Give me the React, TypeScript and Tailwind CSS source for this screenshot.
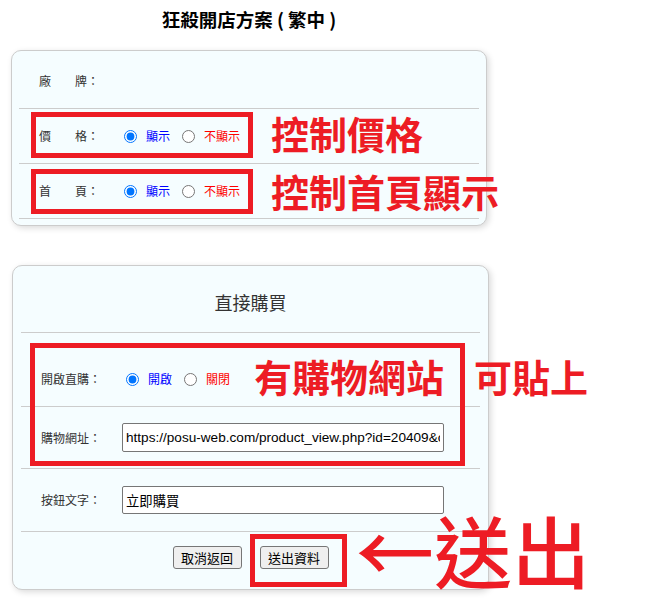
import React from 'react';

const cjk = { fontFamily: '"Noto Sans CJK TC", "Noto Sans", sans-serif' };
const inputFont = { fontFamily: '"Liberation Sans", "Noto Sans CJK TC", sans-serif' };

function RadioPair({ name, on, off }: { name: string; on: string; off: string }) {
  return (
    <div className="flex items-center text-[12px]">
      <input type="radio" name={name} defaultChecked className="m-0 ml-[5px] w-[13px] h-[13px]" />
      <span className="ml-[9px] text-[#0000ff]">{on}</span>
      <input type="radio" name={name} className="m-0 ml-[12px] w-[13px] h-[13px]" />
      <span className="ml-[9px] text-[#ff0000]">{off}</span>
    </div>
  );
}

function Row1({ label, children }: { label: string; children?: React.ReactNode }) {
  return (
    <div className="h-[55px] flex items-center pl-[20px] border-b border-[#cccccc]">
      <div className="w-[80px] text-[12px] text-[#333333] whitespace-pre">{label}</div>
      {children}
    </div>
  );
}

export default function App() {
  return (
    <div className="relative w-[652px] h-[598px] bg-white" style={cjk}>
      <div className="w-[498px]">
        <h1 className="h-[38px] leading-[38px] text-center text-[18.5px] font-bold text-black">
          狂殺開店方案 ( 繁中 )
        </h1>

        {/* 基本設定 */}
        <div className="ml-[11px] mt-[12px] w-[476px] h-[176px] bg-[#f5fdff] border border-[#cccccc] rounded-[10px] shadow-[2px_2px_6px_rgba(0,0,0,0.15)] px-[7px] pt-[3px]">
          <Row1 label="廠　　牌：" />
          <Row1 label="價　　格：">
            <RadioPair name="price" on="顯示" off="不顯示" />
          </Row1>
          <Row1 label="首　　頁：">
            <RadioPair name="home" on="顯示" off="不顯示" />
          </Row1>
        </div>

        {/* 直接購買 */}
        <div className="ml-[12px] mt-[39px] w-[477px] h-[325px] bg-[#f5fdff] border border-[#cccccc] rounded-[10px] shadow-[2px_2px_6px_rgba(0,0,0,0.15)] px-[8px]">
          <div className="h-[67px] pt-[7px] flex items-center justify-center border-b border-[#cccccc] text-[18px] text-[#333333]">
            直接購買
          </div>
          <div className="h-[74px] pt-[19px] flex items-center pl-[20px] border-b border-[#cccccc]">
            <div className="w-[81px] text-[12px] text-[#333333]">開啟直購：</div>
            <div className="flex items-center text-[12px]">
              <input type="radio" name="buy" defaultChecked className="m-0 ml-[4px] w-[13px] h-[13px]" />
              <span className="ml-[9px] text-[#0000ff]">開啟</span>
              <input type="radio" name="buy" className="m-0 ml-[12px] w-[13px] h-[13px]" />
              <span className="ml-[9px] text-[#ff0000]">關閉</span>
            </div>
          </div>
          <div className="h-[62px] flex items-center pl-[20px] border-b border-[#cccccc]">
            <div className="w-[81px] text-[12px] text-[#333333]">購物網址：</div>
            <input
              type="text"
              defaultValue="https://posu-web.com/product_view.php?id=20409&cid=1"
              className="w-[322px] h-[29px] px-[3px] bg-white border border-[#767676] rounded-[2px] text-[13.6px] text-black outline-none"
              style={inputFont}
            />
          </div>
          <div className="h-[63px] flex items-center pl-[20px] border-b border-[#cccccc]">
            <div className="w-[81px] text-[12px] text-[#333333]">按鈕文字：</div>
            <input
              type="text"
              defaultValue="立即購買"
              className="w-[322px] h-[28px] px-[3px] bg-white border border-[#767676] rounded-[2px] text-[13.33px] text-black outline-none"
              style={inputFont}
            />
          </div>
          <div className="h-[57px] pb-[6px] flex items-center justify-center gap-[18px]">
            <button className="h-[23px] w-[69px] bg-[#efefef] border border-[#767676] rounded-[3px] text-[13px] text-black">取消返回</button>
            <button className="h-[23px] w-[69px] bg-[#efefef] border border-[#767676] rounded-[3px] text-[13px] text-black">送出資料</button>
          </div>
        </div>
      </div>

      {/* 標註 */}
      <div className="absolute left-[31px] top-[112px] w-[222px] h-[46px] border-[5px] border-[#ed1c24]" />
      <div className="absolute left-[31px] top-[169px] w-[222px] h-[45px] border-[5px] border-[#ed1c24]" />
      <div className="absolute left-[271px] top-[109px] text-[38px] leading-[48px] font-bold text-[#ed1c24] whitespace-nowrap">控制價格</div>
      <div className="absolute left-[271px] top-[167px] text-[38px] leading-[48px] font-bold text-[#ed1c24] whitespace-nowrap">控制首頁顯示</div>

      <div className="absolute left-[30px] top-[343px] w-[435px] h-[123px] border-[5px] border-[#ed1c24]" />
      <div className="absolute left-[254px] top-[352px] text-[38px] leading-[48px] font-bold text-[#ed1c24] whitespace-nowrap">有購物網站</div>
      <div className="absolute left-[474px] top-[352px] text-[38px] leading-[48px] font-bold text-[#ed1c24] whitespace-nowrap">可貼上</div>

      <div className="absolute left-[250px] top-[534px] w-[97px] h-[53px] border-[5px] border-[#ed1c24]" />
      <div className="absolute left-[356px] top-[509px] text-[78px] leading-[80px] font-medium text-[#ed1c24] whitespace-nowrap">←送出</div>
    </div>
  );
}
